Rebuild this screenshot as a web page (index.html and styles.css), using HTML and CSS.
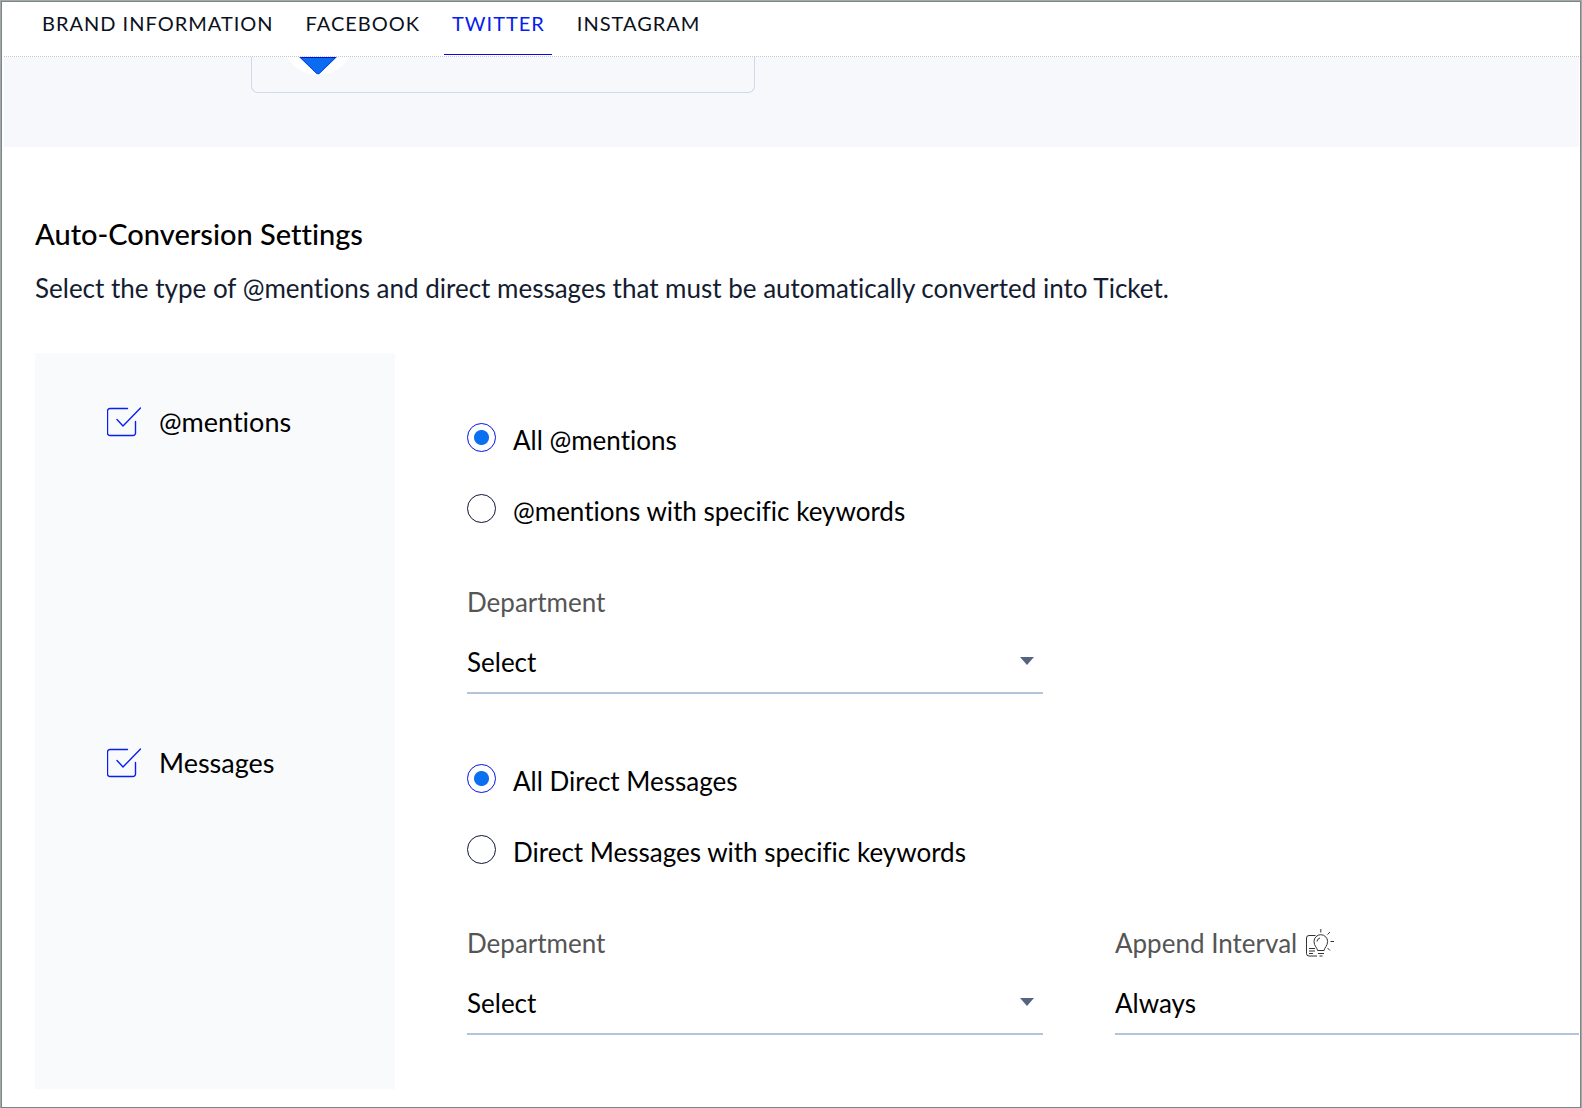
FILE: index.html
```html
<!DOCTYPE html>
<html lang="en">
<head>
<meta charset="UTF-8">
<meta name="viewport" content="width=device-width, initial-scale=1">
<title>Brand Settings - Twitter</title>
<link rel="stylesheet" href="styles.css">
</head>
<body>
  <div class="frame">
    <header class="header">
      <nav class="tabs">
        <a href="#brand" class="tab">BRAND INFORMATION</a>
        <a href="#facebook" class="tab">FACEBOOK</a>
        <a href="#twitter" class="tab active" aria-current="page">TWITTER</a>
        <a href="#instagram" class="tab">INSTAGRAM</a>
      </nav>
    </header>

    <section class="account-band">
      <div class="account-card">
        <svg class="account-logo" viewBox="0 54 72 18" aria-hidden="true">
          <circle cx="36" cy="36" r="36" fill="#fff"/>
          <path d="M17 54h38L37.5 70.5q-1.5 1.2-3 0z" fill="#0a6cf0"/>
          <path d="M18 54.5h36" stroke="#0510e0" fill="none"/>
          <path d="M18 54L34.5 70.3q1.5 1.2 3 0L54 54" stroke="#0a3cf0" fill="none"/>
        </svg>
      </div>
    </section>

    <main class="settings">
      <h1 class="title">Auto-Conversion Settings</h1>
      <p class="subtitle">Select the type of @mentions and direct messages that must be automatically converted into Ticket.</p>

      <div class="rules">
        <div class="rule">
          <div class="rule-side">
            <label class="check">
              <span class="check-icon">
                <input type="checkbox" checked>
                <svg viewBox="0 0 34 30" aria-hidden="true"><path d="M20.500 1.500H3a2.500 2.500 0 0 0-2.500 2.500v22a2.500 2.500 0 0 0 2.500 2.500h23a2.500 2.500 0 0 0 2.500-2.500V14.500M10 12.500l6 6.500L33.500 1"/></svg>
              </span>
              @mentions
            </label>
          </div>
          <div class="rule-body">
            <div class="radios">
              <label class="radio"><input type="radio" name="mentions" checked>All @mentions</label>
              <label class="radio"><input type="radio" name="mentions">@mentions with specific keywords</label>
            </div>
            <div class="fields">
              <div class="field">
                <label class="field-label" for="mentions-dept">Department</label>
                <div class="select-box arrow">
                  <select id="mentions-dept"><option>Select</option></select>
                </div>
              </div>
            </div>
          </div>
        </div>

        <div class="rule">
          <div class="rule-side">
            <label class="check">
              <span class="check-icon">
                <input type="checkbox" checked>
                <svg viewBox="0 0 34 30" aria-hidden="true"><path d="M20.500 1.500H3a2.500 2.500 0 0 0-2.500 2.500v22a2.500 2.500 0 0 0 2.500 2.500h23a2.500 2.500 0 0 0 2.500-2.500V14.500M10 12.500l6 6.500L33.500 1"/></svg>
              </span>
              Messages
            </label>
          </div>
          <div class="rule-body">
            <div class="radios">
              <label class="radio"><input type="radio" name="messages" checked>All Direct Messages</label>
              <label class="radio"><input type="radio" name="messages">Direct Messages with specific keywords</label>
            </div>
            <div class="fields">
              <div class="field">
                <label class="field-label" for="messages-dept">Department</label>
                <div class="select-box arrow">
                  <select id="messages-dept"><option>Select</option></select>
                </div>
              </div>
              <div class="field field-wide">
                <label class="field-label" for="interval">Append Interval
                  <svg class="hint-icon" viewBox="0 0 28 28" aria-hidden="true">
                    <path d="M9.500 6.500H3a2.500 2.500 0 0 0-2.500 2.500v15.500A2.500 2.500 0 0 0 3 27h8M3 19.500h6M3 22h6M3 24.500h4"/>
                    <path d="M11.500 21.500c0-2.500-3.500-4.500-3.500-9a6.800 6.800 0 0 1 13.600 0c0 4.500-3.500 6.500-3.500 9zM11 12.500a4 4 0 0 1 3-3.500M12 24.500h6M13.500 27h3"/>
                    <path d="M14.800 0v3.500M21.500 5.500l2.500-2.500M24.500 12.500h3.500M21.500 19l2.500 2.500"/>
                  </svg>
                </label>
                <div class="select-box">
                  <select id="interval"><option>Always</option></select>
                </div>
              </div>
            </div>
          </div>
        </div>
      </div>
    </main>
  </div>
</body>
</html>
```
FILE: styles.css
```css
* {
  box-sizing: border-box;
}
body {
  margin: 0;
  background-color: #fff;
  color: #000;
  font-family: Lato, "Open Sans", sans-serif;
  font-size: 26px;
  font-variant-ligatures: none;
  line-height: 34px;
}
.frame {
  min-height: 100vh;
  padding: 1px 2px 1px 3px;
  border: 1px solid #a3a9ab;
  box-shadow: inset 0 0 0 1px #7c8486;
}

/* tabs */
.header {
  padding: 0 0 1px 30px;
  border-bottom: 1px dotted #c3c9d2;
}
.tabs {
  display: flex;
  gap: 17px;
}
.tab {
  padding: 6px 7px 16px 8px;
  border-bottom: 1px solid transparent;
  color: #0b1020;
  font-size: 20px;
  line-height: 30px;
  letter-spacing: 1px;
  text-decoration: none;
}
.tab.active {
  color: #0420ee;
  border-bottom-color: #0808e0;
}

/* connected account, scrolled under the tabs */
.account-band {
  padding: 0 0 54px 247px;
  background-color: #f6f8fc;
}
.account-card {
  max-width: 504px;
  height: 36px;
  padding-left: 30px;
  border: 1px solid #cfd9e8;
  border-top: none;
  border-radius: 0 0 7px 7px;
}
.account-logo {
  display: block;
  width: 72px;
  height: 18px;
}

.settings {
  padding: 69px 0 18px 31px;
}
.title {
  margin: 0 0 19px;
  font-size: 29px;
  font-weight: 500;
  line-height: 36px;
}
.subtitle {
  margin: 0 0 48px;
  color: #131c30;
}

.rule {
  display: flex;
}
.rule-side {
  flex: 0 0 360px;
  padding: 54px 24px 0 72px;
  background-color: #f8fafc;
}
.rule-body {
  flex: 1;
  min-width: 0;
  padding: 70px 0 0 72px;
}
.rule:last-child .rule-body {
  padding-bottom: 54px;
}

.check {
  display: flex;
  align-items: center;
  gap: 18px;
  font-size: 27px;
  line-height: 30px;
}
.check-icon {
  position: relative;
  width: 34px;
  height: 30px;
}
.check-icon input {
  position: absolute;
  inset: 0;
  width: 100%;
  height: 100%;
  margin: 0;
  opacity: 0;
}
.check-icon svg {
  display: block;
  fill: none;
  stroke: #0a1ef0;
  stroke-width: 1.4;
  stroke-linecap: round;
}

.radios {
  display: flex;
  flex-direction: column;
  gap: 37px;
  margin-bottom: 57px;
}
.radio {
  display: flex;
  align-items: flex-start;
  gap: 17px;
}
.radio input {
  flex: none;
  appearance: none;
  width: 29px;
  height: 29px;
  margin: 0;
  border: 1px solid #101535;
  border-radius: 50%;
}
.radio input:checked {
  border-color: #0510e8;
  background: radial-gradient(circle, #0a70f0 7px, #fff 8px);
}

.fields {
  display: flex;
  gap: 72px;
}
.field {
  flex: 0 1 576px;
}
.field-wide {
  flex: 1;
}
.field-label {
  display: flex;
  align-items: center;
  gap: 9px;
  margin-bottom: 19px;
  color: #555;
}
.hint-icon {
  width: 28px;
  height: 28px;
  fill: none;
  stroke: #333;
}
.select-box {
  position: relative;
}
.select-box select {
  display: block;
  appearance: none;
  width: 100%;
  height: 56px;
  padding: 0 0 6px;
  border: none;
  border-bottom: 2px solid #b4c4da;
  border-radius: 0;
  background: none;
  color: #000;
  font: inherit;
}
.select-box.arrow::after {
  content: "";
  position: absolute;
  top: 19px;
  right: 9px;
  width: 14px;
  height: 8px;
  background-color: #56657f;
  clip-path: polygon(0 0, 100% 0, 50% 100%);
  pointer-events: none;
}
```
